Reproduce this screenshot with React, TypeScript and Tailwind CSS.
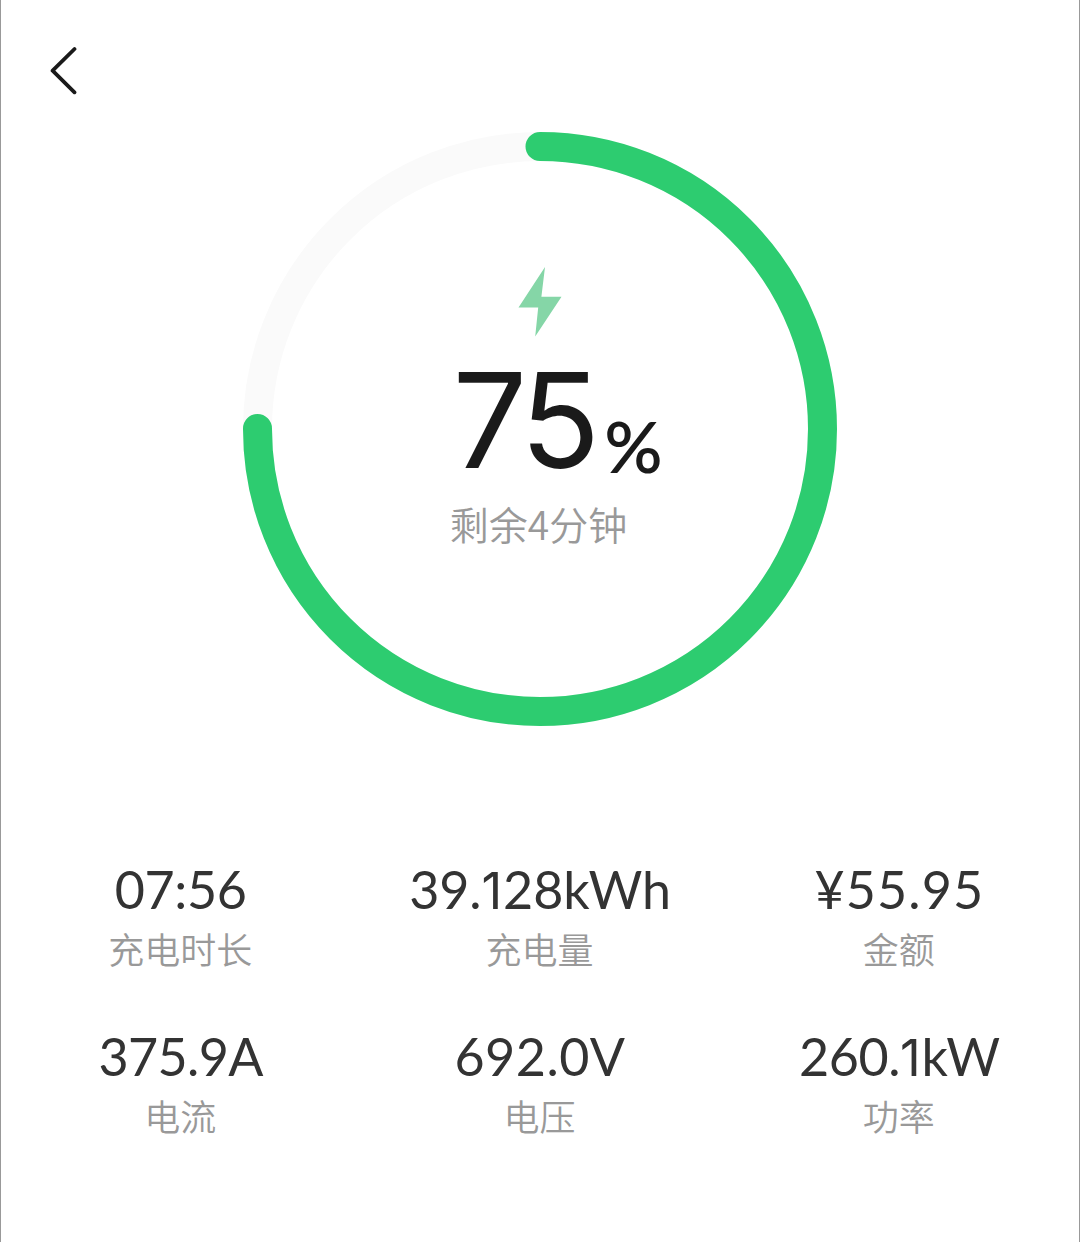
import React from 'react';

interface Stat {
  label: string;
  value: string;
  spacing: string;
}

const stats: Stat[] = [
  { label: '充电时长', value: '07:56', spacing: 'tracking-[-0.4px]' },
  { label: '充电量', value: '39.128kWh', spacing: 'tracking-[-0.1px]' },
  { label: '金额', value: '¥55.95', spacing: 'tracking-[1.1px]' },
  { label: '电流', value: '375.9A', spacing: 'tracking-[-0.6px]' },
  { label: '电压', value: '692.0V', spacing: 'tracking-[0.5px]' },
  { label: '功率', value: '260.1kW', spacing: 'tracking-[-0.4px]' },
];

const RADIUS = 282.5;
const CIRCUMFERENCE = 2 * Math.PI * RADIUS;

function ProgressRing({ percent }: { percent: number }) {
  return (
    <svg viewBox="0 0 594 594" className="col-start-1 row-start-1 h-[594px] w-[594px]" fill="none">
      <circle cx="297" cy="297" r={RADIUS} stroke="#fafafa" strokeWidth="29" />
      <circle
        cx="297"
        cy="297"
        r={RADIUS}
        stroke="#2dcc70"
        strokeWidth="29"
        strokeLinecap="round"
        strokeDasharray={`${(CIRCUMFERENCE * percent) / 100} ${CIRCUMFERENCE}`}
        transform="rotate(-90 297 297)"
      />
    </svg>
  );
}

// Lato's "1" has a foot, Inter's is a plain narrow stroke
function StatValue({ value }: { value: string }) {
  return (
    <>
      {value.split(/(1)/).map((part, i) =>
        part === '1' ? (
          <span key={i} className="pr-px font-['Inter'] text-[51px] leading-none font-normal">1</span>
        ) : (
          part
        )
      )}
    </>
  );
}

export default function App() {
  const percent = 75;

  return (
    <div className="h-[1242px] w-[1080px] overflow-hidden border-x border-[#999999] bg-white font-['Lato','Noto_Sans_CJK_SC',sans-serif]">
      <header className="h-[132px] pt-[46px] pl-[49px]">
        <button className="block" aria-label="返回">
          <svg viewBox="0 0 28 50" className="h-[50px] w-[28px]" fill="none">
            <path d="M24.5 3 L2.6 24.7 L24.5 46.3" stroke="#1a1a1a" strokeWidth="3.8" strokeLinecap="round" strokeLinejoin="round" />
          </svg>
        </button>
      </header>

      <main>
        <div className="grid justify-center">
          <ProgressRing percent={percent} />
          <div className="col-start-1 row-start-1 flex flex-col items-center pt-[135px]">
            <svg viewBox="0 0 44 70" className="h-[70px] w-[44px]">
              <path d="M27 0 L23.4 29.8 L43.5 29.8 L17.2 69.5 L20.2 40.5 L0.5 40.5 Z" fill="#85d6a7" />
            </svg>
            <div className="flex h-[158px] items-baseline pt-[13px] pl-[35px] text-[#1a1a1a]">
              <span className="font-['Inter'] text-[132px] leading-[140px] font-normal tracking-[-6px]">{percent}</span>
              <span className="translate-y-[5px] pl-[10px] text-[72px] leading-none font-semibold">%</span>
            </div>
            <p className="pr-[3px] font-['Noto_Sans_CJK_SC',sans-serif] text-[39px] leading-[56px] font-[350] text-[#999999]">剩余4分钟</p>
          </div>
        </div>

        <div className="grid grid-cols-3 gap-y-[46px] pt-[131px] text-center">
          {stats.map((stat) => (
            <div key={stat.label}>
              <div className={`h-[65px] text-[52px] leading-[64px] text-[#333333] ${stat.spacing}`}>
                <StatValue value={stat.value} />
              </div>
              <div className="pr-px text-[36px] leading-[56px] font-[350] text-[#999999]">{stat.label}</div>
            </div>
          ))}
        </div>
      </main>
    </div>
  );
}
